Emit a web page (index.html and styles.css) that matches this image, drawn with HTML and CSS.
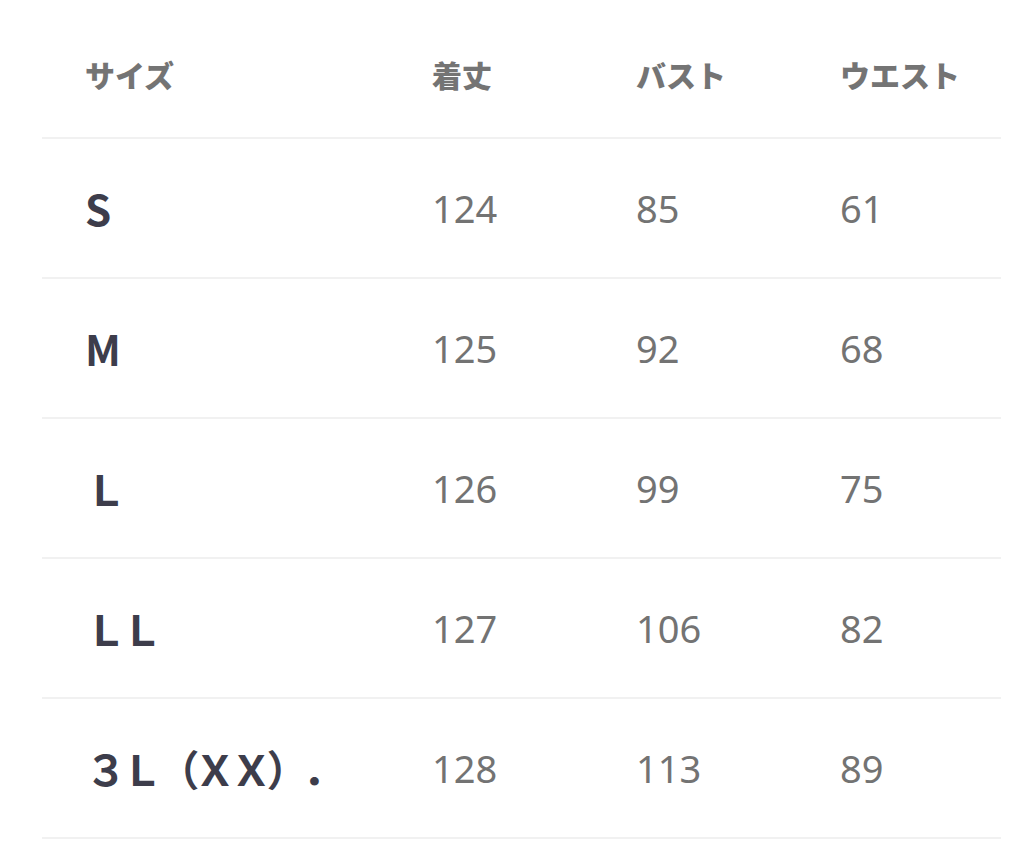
FILE: index.html
```html
<!DOCTYPE html>
<html lang="ja">
<head>
<meta charset="utf-8">
<link rel="stylesheet" href="styles.css">
</head>
<body>
<div class="table">
  <div class="row head">
    <div class="cell">サイズ</div>
    <div class="cell">着丈</div>
    <div class="cell">バスト</div>
    <div class="cell">ウエスト</div>
  </div>
  <div class="row">
    <div class="cell size">S</div>
    <div class="cell num">124</div>
    <div class="cell num">85</div>
    <div class="cell num">61</div>
  </div>
  <div class="row">
    <div class="cell size">M</div>
    <div class="cell num">125</div>
    <div class="cell num">92</div>
    <div class="cell num">68</div>
  </div>
  <div class="row">
    <div class="cell size">Ｌ</div>
    <div class="cell num">126</div>
    <div class="cell num">99</div>
    <div class="cell num">75</div>
  </div>
  <div class="row">
    <div class="cell size">ＬＬ</div>
    <div class="cell num">127</div>
    <div class="cell num">106</div>
    <div class="cell num">82</div>
  </div>
  <div class="row">
    <div class="cell size">３Ｌ（ＸＸ）．</div>
    <div class="cell num">128</div>
    <div class="cell num">113</div>
    <div class="cell num">89</div>
  </div>
</div>
</body>
</html>
```

FILE: styles.css
```css
html, body {
  margin: 0;
  padding: 0;
  background: #ffffff;
}
body {
  font-family: "Noto Sans CJK JP", "Noto Sans", sans-serif;
}
.table {
  margin-left: 42px;
  width: 959px;
}
.row {
  display: grid;
  grid-template-columns: 347px 204px 204px 1fr;
  align-items: center;
  padding-left: 43px;
  height: 138px;
  border-bottom: 2px solid #f1f1f1;
}
.row.head {
  height: 127px;
  padding-top: 10px;
}
.head .cell {
  font-size: 30px;
  font-weight: 900;
  color: #747474;
  line-height: 1;
}
.size {
  font-size: 42px;
  font-weight: 700;
  color: #3d3d4b;
  line-height: 1;
  letter-spacing: -5.7px;
  white-space: nowrap;
  text-spacing-trim: space-all;
  font-feature-settings: "palt" 0, "halt" 0;
}
.num {
  font-family: "Noto Sans", sans-serif;
  font-size: 38px;
  color: #737373;
  line-height: 1;
}
```
